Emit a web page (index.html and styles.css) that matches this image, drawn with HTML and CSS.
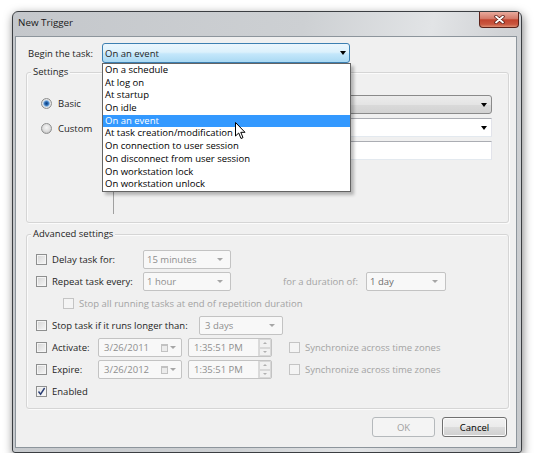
FILE: index.html
```html
<!DOCTYPE html>
<html lang="en">
<head>
    <meta charset="UTF-8">
    <meta name="viewport" content="width=device-width, initial-scale=1.0">
    <title>New Trigger</title>
    <link rel="stylesheet" href="styles.css">
</head>
<body>
    <div class="window">
        <div class="titlebar">
            <span class="title">New Trigger</span>
            <div class="close">
                <svg width="11" height="9" viewBox="0 0 11 9">
                    <path d="M2 1.5 L9 7.5 M9 1.5 L2 7.5" stroke="#5a1e16" stroke-width="3.4" stroke-linecap="round"/>
                    <path d="M2 1.5 L9 7.5 M9 1.5 L2 7.5" stroke="#fff" stroke-width="1.8" stroke-linecap="round"/>
                </svg>
            </div>
        </div>

        <div class="client">
            <div class="begin-row">
                <span class="begin-label">Begin the task:</span>
                <div class="task-combo">
                    <span>On an event</span>
                    <span class="arrow"></span>
                    <!-- open drop-down list -->
                    <ul class="task-list">
                        <li>On a schedule</li>
                        <li>At log on</li>
                        <li>At startup</li>
                        <li>On idle</li>
                        <li class="selected">On an event</li>
                        <li>At task creation/modification</li>
                        <li>On connection to user session</li>
                        <li>On disconnect from user session</li>
                        <li>On workstation lock</li>
                        <li>On workstation unlock</li>
                    </ul>
                </div>
            </div>

            <div class="group settings">
                <div class="group-title">Settings</div>
                <div class="settings-body">
                    <div class="mode-col">
                        <div class="radio-row"><span class="radio checked"></span>Basic</div>
                        <div class="radio-row"><span class="radio"></span>Custom</div>
                    </div>
                    <!-- labels sit under the open list, only the controls show -->
                    <div class="event-fields">
                        <div class="combo combo-button"><span class="arrow"></span></div>
                        <div class="combo combo-edit"><span class="arrow"></span></div>
                        <div class="textbox"></div>
                    </div>
                </div>
            </div>

            <div class="group advanced">
                <div class="group-title">Advanced settings</div>
                <div class="adv-body">
                    <div class="adv-row">
                        <span class="chk"></span>
                        <span class="lbl w-delay">Delay task for:</span>
                        <div class="dis-combo w-88">15 minutes<span class="arrow gray"></span></div>
                    </div>
                    <div class="adv-row">
                        <span class="chk"></span>
                        <span class="lbl w-delay">Repeat task every:</span>
                        <div class="dis-combo w-88">1 hour<span class="arrow gray"></span></div>
                        <span class="lbl dur-label disabled">for a duration of:</span>
                        <div class="dis-combo w-80 darker">1 day<span class="arrow gray"></span></div>
                    </div>
                    <div class="adv-row sub">
                        <span class="chk dim"></span>
                        <span class="lbl disabled">Stop all running tasks at end of repetition duration</span>
                    </div>
                    <div class="adv-row">
                        <span class="chk"></span>
                        <span class="lbl w-stop">Stop task if it runs longer than:</span>
                        <div class="dis-combo w-84">3 days<span class="arrow gray"></span></div>
                    </div>
                    <div class="adv-row">
                        <span class="chk"></span>
                        <span class="lbl w-date">Activate:</span>
                        <div class="dis-combo w-84">3/26/2011<span class="cal"></span><span class="arrow gray small"></span></div>
                        <div class="dis-combo w-84 time">1:35:51 PM<span class="spin"><i></i><i class="down"></i></span></div>
                        <span class="chk dim sync"></span>
                        <span class="lbl disabled">Synchronize across time zones</span>
                    </div>
                    <div class="adv-row">
                        <span class="chk"></span>
                        <span class="lbl w-date">Expire:</span>
                        <div class="dis-combo w-84">3/26/2012<span class="cal"></span><span class="arrow gray small"></span></div>
                        <div class="dis-combo w-84 time">1:35:51 PM<span class="spin"><i></i><i class="down"></i></span></div>
                        <span class="chk dim sync"></span>
                        <span class="lbl disabled">Synchronize across time zones</span>
                    </div>
                    <div class="adv-row">
                        <span class="chk checked">
                            <svg width="9" height="9" viewBox="0 0 9 9"><path d="M1.5 4.5 L3.6 7.2 L7.6 1" fill="none" stroke="#2b3f75" stroke-width="1.4"/></svg>
                        </span>
                        <span class="lbl">Enabled</span>
                    </div>
                </div>
            </div>

            <div class="buttons">
                <button class="btn ok" disabled>OK</button>
                <button class="btn cancel">Cancel</button>
            </div>
        </div>
    </div>

    <svg class="cursor" width="12" height="18" viewBox="0 0 12 18">
        <path d="M0.5 0.5 L0.5 14 L3.7 11 L6 16.5 L8 15.6 L5.8 10.3 L10 10.3 Z" fill="#fff" stroke="#000" stroke-width="1"/>
    </svg>
</body>
</html>
```

FILE: styles.css
```css
* {
    box-sizing: border-box;
}
body {
    margin: 0;
    background: #fff;
    font-family: "Open Sans", "Segoe UI", sans-serif;
    font-size: 9.5px;
    color: #1e1e1e;
}
.window {
    margin: 11px 0 0 12px;
    width: 510px;
    height: 442px;
    border: 1px solid #3b3e42;
    border-radius: 6px 6px 3px 3px;
    padding: 0 4px 4px 2px;
    background: linear-gradient(100deg, #c4c7cb 0%, #cdd0d3 50%, #e2e4e6 72%, #d1d3d6 84%, #c6c9cc 100%);
    box-shadow: 1px 3px 10px rgba(0, 0, 0, 0.5);
    display: flex;
    flex-direction: column;
}
.titlebar {
    height: 24px;
    display: flex;
    align-items: flex-start;
}
.title {
    font-size: 9.8px;
    line-height: 14px;
    padding: 4px 0 0 3px;
    color: #1a1a1a;
}
.close {
    margin-left: auto;
    margin-right: -2px;
    width: 40px;
    height: 16px;
    border: 1px solid #5b2219;
    border-top: none;
    border-radius: 0 0 4px 4px;
    background: linear-gradient(#e9aa9d, #d47a69 45%, #c2452f 52%, #c9563f 82%, #de8e72);
    display: flex;
    align-items: center;
    justify-content: center;
}
.client {
    flex: 1;
    background: #f0f0f0;
    border: 1px solid #8d959c;
    padding: 6px 7px 0 10px;
}

/* begin the task */
.begin-row {
    display: flex;
    align-items: center;
    height: 20px;
}
.begin-label {
    width: 76px;
    padding-left: 2px;
}
.task-combo {
    position: relative;
    width: 248px;
    height: 20px;
    border: 1px solid #3c7fb1;
    border-radius: 3px;
    background: linear-gradient(#ebf6fd 0%, #dcf1fc 45%, #c4e7fb 55%, #aad9f3 100%);
    display: flex;
    align-items: center;
    padding-left: 2px;
}
.arrow {
    margin-left: auto;
    margin-right: 3px;
    width: 0;
    height: 0;
    border-style: solid;
    border-width: 4px 3.5px 0;
    border-color: #000 transparent transparent;
}
.arrow.gray {
    border-color: #a6a6a6 transparent transparent;
    border-width: 3px 3px 0;
    margin-right: 7px;
}
.arrow.small {
    margin-left: 2px;
    margin-right: 5px;
}
.task-list {
    position: absolute;
    top: 19px;
    left: -1px;
    z-index: 5;
    width: 249px;
    margin: 0;
    padding: 0;
    list-style: none;
    background: #fff;
    border: 1px solid #646464;
    box-shadow: 3px 3px 3px rgba(0, 0, 0, 0.25);
}
.task-list li {
    line-height: 12.7px;
    height: 12.7px;
    padding-left: 2px;
    color: #000;
    white-space: nowrap;
}
.task-list li.selected {
    background: #3399ff;
    color: #fff;
}

/* group boxes */
.group {
    border: 1px solid #d5d5d5;
    border-radius: 3px;
    box-shadow: inset 1px 1px #fbfbfb, 1px 1px #fbfbfb;
}
.group-title {
    margin: -8px 0 0 4px;
    padding: 0 2px;
    line-height: 14px;
    background: #f0f0f0;
    width: max-content;
}
.settings {
    margin-top: 9px;
    height: 151px;
}
.settings-body {
    display: flex;
    height: 143px;
}
.mode-col {
    width: 87px;
    margin: 5px 0 8px;
    padding-top: 12px;
    border-right: 1px solid #a0a0a0;
}
.radio-row {
    display: flex;
    align-items: center;
    gap: 6px;
    height: 14px;
    padding-left: 14px;
}
.radio-row + .radio-row {
    margin-top: 11px;
}
.radio {
    width: 11px;
    height: 11px;
    border-radius: 50%;
    border: 1px solid #8e8f8f;
    background: radial-gradient(circle at 50% 40%, #f6f6f6 0, #dadada 4px, #c9c9c9 5px);
}
.radio.checked {
    background: radial-gradient(circle, #0d3f7e 0, #2a6ab3 1.8px, #7fb0e0 2.8px, #e9e9e9 3.8px, #d0d0d0 5px);
}
.event-fields {
    flex: 1;
    display: flex;
    flex-direction: column;
    gap: 4px;
    padding: 16px 16px 0 70px;
}
.combo,
.textbox {
    height: 19px;
    display: flex;
    align-items: center;
}
.combo .arrow {
    margin-right: 4px;
}
.combo-button {
    border: 1px solid #8a8a8a;
    border-radius: 3px;
    background: linear-gradient(#ececec, #e4e4e4 50%, #dadada 50%, #d2d2d2);
}
.combo-edit,
.textbox {
    background: #fff;
    border: 1px solid;
    border-color: #abadb3 #e2e3ea #e3e9ef;
}

/* advanced settings */
.advanced {
    margin-top: 11px;
    height: 175px;
}
.adv-body {
    display: flex;
    flex-direction: column;
    gap: 3px;
    padding: 9px 0 0 9px;
}
.adv-row {
    display: flex;
    align-items: center;
    height: 19px;
}
.adv-row.sub {
    padding-left: 27px;
}
.chk {
    width: 11px;
    height: 11px;
    margin-right: 5px;
    border: 1px solid #8e8f8f;
    background: linear-gradient(135deg, #d4d4d4, #f7f7f7);
    box-shadow: inset 0 0 0 1px #f4f4f4;
    display: flex;
    align-items: center;
    justify-content: center;
}
.chk.dim {
    border-color: #c4c4c4;
    background: #f4f4f4;
    box-shadow: none;
}
.chk.checked {
    background: linear-gradient(135deg, #e1e1e1, #fbfbfb);
}
.chk.sync {
    margin-left: 17px;
}
.lbl {
    white-space: nowrap;
}
.lbl.disabled {
    color: #a3a3a3;
}
.w-delay {
    width: 91px;
}
.w-stop {
    width: 147px;
}
.w-date {
    width: 46px;
}
.dur-label {
    margin-left: 52px;
    width: 83px;
}
.dis-combo {
    height: 19px;
    display: flex;
    align-items: center;
    padding-left: 3px;
    border: 1px solid #c3c3c3;
    border-radius: 2px;
    background: #f8f8f8;
    color: #8e8e8e;
    white-space: nowrap;
}
.dis-combo.darker {
    color: #6e6e6e;
}
.w-88 {
    width: 88px;
}
.w-84 {
    width: 84px;
}
.w-80 {
    width: 80px;
}
.adv-row .dis-combo.w-84:not(.time) {
    padding-left: 5px;
}
.time {
    margin-left: 6px;
    padding-left: 5px;
}
.cal {
    margin-left: auto;
    width: 7px;
    height: 8px;
    border: 1px solid #c2c2c2;
    border-top-width: 2px;
    background: #ececec;
}
.spin {
    margin-left: auto;
    width: 13px;
    height: 17px;
    display: flex;
    flex-direction: column;
    border-left: 1px solid #dadada;
}
.spin i {
    flex: 1;
    display: flex;
    align-items: center;
    justify-content: center;
    border: 1px solid #d8d8d8;
    background: #f1f1f1;
}
.spin i::after {
    content: "";
    border-style: solid;
    border-width: 0 2.5px 2.5px;
    border-color: transparent transparent #b0b0b0;
}
.spin i.down::after {
    border-width: 2.5px 2.5px 0;
    border-color: #b0b0b0 transparent transparent;
}

/* dialog buttons */
.buttons {
    display: flex;
    justify-content: flex-end;
    gap: 7px;
    margin: 8px 2px 0 0;
}
.btn {
    height: 20px;
    padding: 0;
    font: inherit;
    border-radius: 3px;
}
.ok {
    width: 63px;
    border: 1px solid #b5b9bc;
    background: #f4f4f4;
    color: #a0a0a0;
}
.cancel {
    width: 65px;
    border: 1px solid #707070;
    background: linear-gradient(#f2f2f2, #ebebeb 50%, #dddddd 50%, #cfcfcf);
    color: #000;
    box-shadow: inset 0 0 0 1px #fbfbfb;
}
.cursor {
    position: absolute;
    left: 235px;
    top: 122px;
    z-index: 10;
}
```
